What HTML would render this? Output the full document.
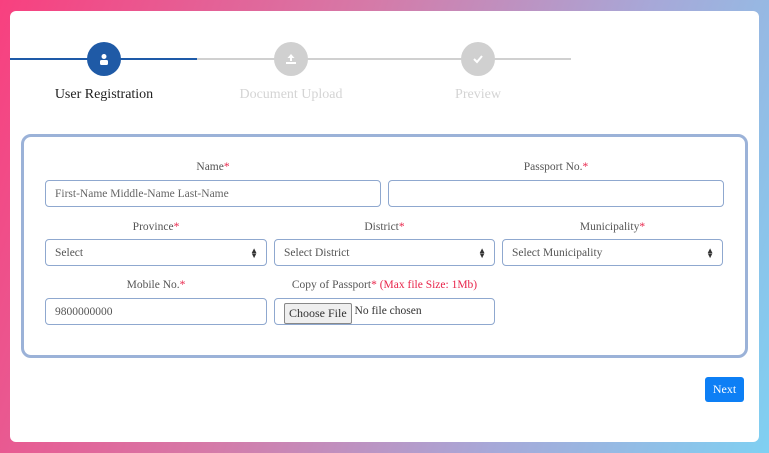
<!DOCTYPE html><html><head><style>
*{box-sizing:border-box}body{margin:0;width:769px;height:453px;background:linear-gradient(110deg,#f8407f 0%,#d57aa8 40%,#a7a8d8 70%,#7fd0f2 100%);font-family:"Liberation Serif",serif;position:relative;overflow:hidden}
.card{position:absolute;left:10px;top:11px;width:749px;height:431px;background:#fff;border-radius:6px}
.ln{position:absolute;height:2px;top:47px}
.c{position:absolute;top:31px;width:34px;height:34px;border-radius:50%;display:flex;align-items:center;justify-content:center}
.lb{position:absolute;top:76px;font-size:14px;text-align:center;width:200px}
.box{position:absolute;left:11px;top:123px;width:727px;height:224px;border:3px solid #9bb2d8;border-radius:10px}
.f{position:absolute;height:27px;border:1px solid #8fa8cf;border-radius:4px;font-size:11.5px;color:#555;padding-left:9px;line-height:27px}
.l{position:absolute;font-size:11.5px;color:#555;text-align:center}
.l b{color:#e8244a;font-weight:normal}
.ar{position:absolute;right:8px;top:8px;font-size:8px;line-height:5px;color:#333}
</style></head><body><div class="card">
<div class="ln" style="left:0;width:187px;background:#1e5aa8"></div>
<div class="ln" style="left:187px;width:374px;background:#d0d0d0"></div>
<div class="c" style="left:77px;background:#1f5aa6"><svg width="12" height="12" viewBox="0 0 12 12"><circle cx="6" cy="3.5" r="2.5" fill="#fff"/><rect x="2" y="7" width="8" height="5" rx="1.5" fill="#fff"/></svg></div>
<div class="c" style="left:264px;background:#d0d0d0"><svg width="12" height="12" viewBox="0 0 12 12"><path d="M6 1L2.5 5H5V8H7V5H9.5Z M1 9H11V11H1Z" fill="#fff"/></svg></div>
<div class="c" style="left:451px;background:#d0d0d0"><svg width="12" height="12" viewBox="0 0 12 12"><path d="M2 6L5 9L10 3" stroke="#fff" stroke-width="2" fill="none"/></svg></div>
<div class="lb" style="left:-6px;color:#222">User Registration</div>
<div class="lb" style="left:181px;color:#d4d4d4">Document Upload</div>
<div class="lb" style="left:368px;color:#d4d4d4">Preview</div>
<div class="box"></div>
<div class="l" style="left:35px;width:336px;top:150px">Name<b>*</b></div>
<div class="l" style="left:378px;width:336px;top:150px">Passport No.<b>*</b></div>
<div class="f" style="left:35px;top:169px;width:336px;color:#666">First-Name Middle-Name Last-Name</div>
<div class="f" style="left:378px;top:169px;width:336px"></div>
<div class="l" style="left:35px;width:222px;top:210px">Province<b>*</b></div>
<div class="l" style="left:264px;width:221px;top:210px">District<b>*</b></div>
<div class="l" style="left:492px;width:221px;top:210px">Municipality<b>*</b></div>
<div class="f" style="left:35px;top:228px;width:222px">Select<span class="ar">▲<br>▼</span></div>
<div class="f" style="left:264px;top:228px;width:221px">Select District<span class="ar">▲<br>▼</span></div>
<div class="f" style="left:492px;top:228px;width:221px">Select Municipality<span class="ar">▲<br>▼</span></div>
<div class="l" style="left:35px;width:222px;top:268px">Mobile No.<b>*</b></div>
<div class="l" style="left:264px;width:221px;top:268px">Copy of Passport<b>* (Max file Size: 1Mb)</b></div>
<div class="f" style="left:35px;top:287px;width:222px">9800000000</div>
<div class="f" style="left:264px;top:287px;width:221px;padding-left:9px;color:#333;line-height:25px"><span style="display:inline-block;margin-top:4px;height:21px;line-height:19px;padding:0 4px;background:#efefef;border:1px solid #888;border-radius:2px;font-size:12px;vertical-align:top">Choose File</span> No file chosen</div>
<div style="position:absolute;left:695px;top:366px;width:39px;height:25px;background:#0d7ff5;border-radius:3px;color:#fff;font-size:12px;text-align:center;line-height:25px">Next</div>
</div></body></html>
